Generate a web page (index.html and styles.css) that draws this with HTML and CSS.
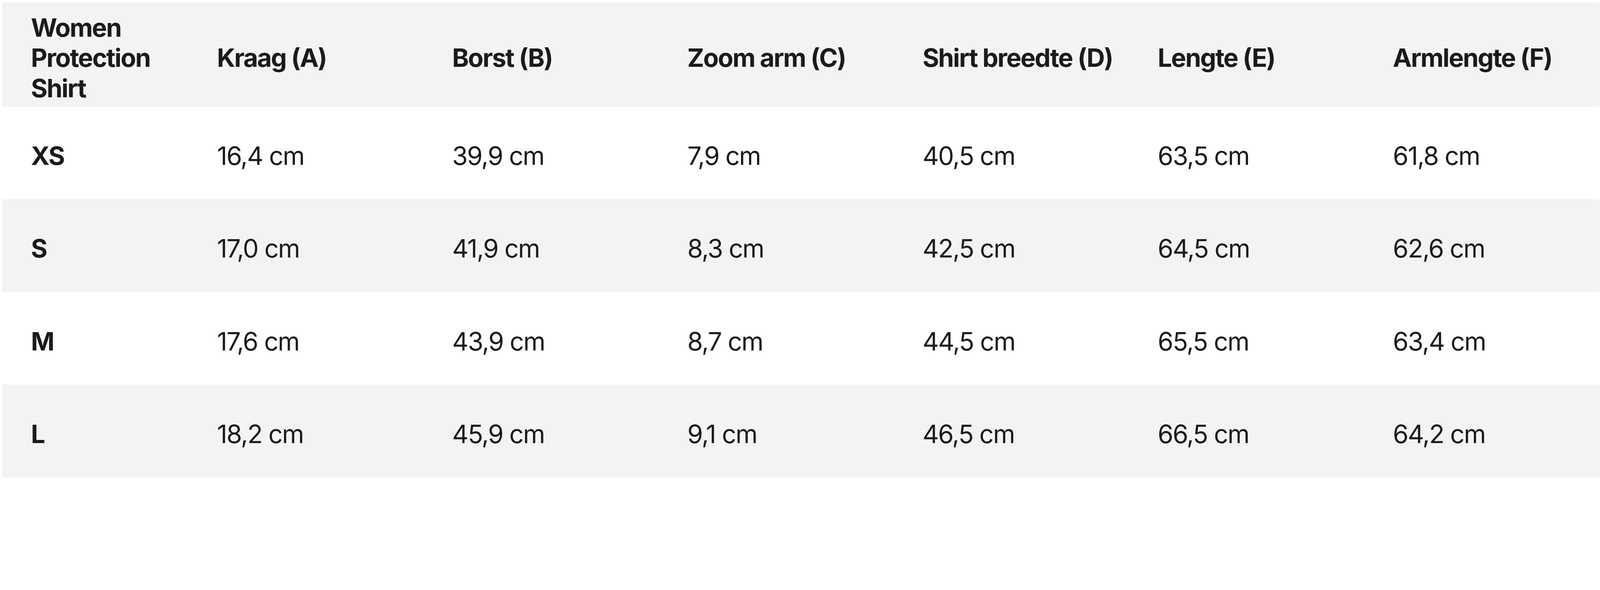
FILE: index.html
```html
<!DOCTYPE html>
<html lang="nl">
<head>
<meta charset="utf-8">
<title>Maattabel Women Protection Shirt</title>
<link rel="stylesheet" href="styles.css">
</head>
<body>
<table class="size-table">
  <colgroup>
    <col class="col-size">
    <col><col><col><col><col><col>
  </colgroup>
  <thead>
    <tr>
      <th>Women<br>Protection<br>Shirt</th>
      <th>Kraag (A)</th>
      <th>Borst (B)</th>
      <th>Zoom arm (C)</th>
      <th>Shirt breedte (D)</th>
      <th>Lengte (E)</th>
      <th>Armlengte (F)</th>
    </tr>
  </thead>
  <tbody>
    <tr>
      <th>XS</th><td>16,4 cm</td><td>39,9 cm</td><td>7,9 cm</td><td>40,5 cm</td><td>63,5 cm</td><td>61,8 cm</td>
    </tr>
    <tr>
      <th>S</th><td>17,0 cm</td><td>41,9 cm</td><td>8,3 cm</td><td>42,5 cm</td><td>64,5 cm</td><td>62,6 cm</td>
    </tr>
    <tr>
      <th>M</th><td>17,6 cm</td><td>43,9 cm</td><td>8,7 cm</td><td>44,5 cm</td><td>65,5 cm</td><td>63,4 cm</td>
    </tr>
    <tr>
      <th>L</th><td>18,2 cm</td><td>45,9 cm</td><td>9,1 cm</td><td>46,5 cm</td><td>66,5 cm</td><td>64,2 cm</td>
    </tr>
  </tbody>
</table>
</body>
</html>
```

FILE: styles.css
```css
:root {
  /* one unit of the 5059px wide design, fluid with the viewport */
  --u: calc(100vw / 5059);
}

html, body {
  background: #ffffff;
}

body {
  margin: calc(var(--u) * 7) 0 0 calc(var(--u) * 8);
  font-family: "Inter", "Liberation Sans", sans-serif;
  color: #1b1b19;
}

.size-table {
  width: calc(var(--u) * 5050);
  table-layout: fixed;
  border-collapse: collapse;
  border-spacing: 0;
  font-size: calc(var(--u) * 80);
  line-height: calc(var(--u) * 96);
}

.col-size {
  width: calc(var(--u) * 588);
}

.size-table th,
.size-table td {
  text-align: left;
  vertical-align: middle;
  padding: calc(var(--u) * 108) calc(var(--u) * 20) calc(var(--u) * 89) calc(var(--u) * 90);
  white-space: nowrap;
}

.size-table th {
  font-weight: 700;
  letter-spacing: -0.035em;
}

.size-table td {
  font-weight: 400;
  letter-spacing: -0.03em;
}

.size-table thead th {
  background: #f3f3f3;
  padding-top: calc(var(--u) * 32);
  padding-bottom: calc(var(--u) * 10);
}

.size-table tbody tr:nth-child(even) {
  background: #f3f3f3;
}

.size-table tbody tr:nth-child(odd) {
  background: #ffffff;
}
```
